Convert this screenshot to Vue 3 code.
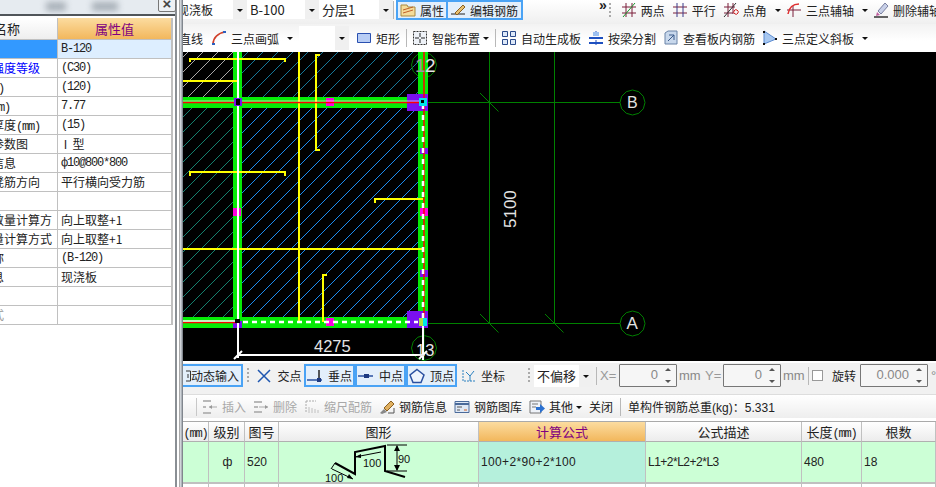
<template>
  <div class="app">
    <aside class="props">
      <div class="caption">
        <span class="blur blur-a"></span>
        <span class="blur blur-b"></span>
        <span class="close">×</span>
      </div>
      <div class="prop-grid">
        <div class="cell head"><span class="shift head-label">属性名称</span></div>
        <div class="cell head active">属性值</div>
        <template v-for="(row, i) in propRows" :key="i">
          <div class="cell label" :class="[row.kind, { selected: i === 0 }]">
            <span class="shift">{{ row.name }}<span v-if="row.unit" class="mono">{{ row.unit }}</span></span>
          </div>
          <div class="cell value" :class="{ 'value-on': i === 0, mono: row.mono }">{{ row.value }}</div>
        </template>
      </div>
    </aside>
    <div class="gutter"></div>

    <main class="work">
      <div class="bar bar-top">
        <div class="combo combo-a"><span class="combo-text clipped">现浇板</span><i class="drop"></i></div>
        <div class="combo combo-b"><span class="combo-text">B-100</span><i class="drop"></i></div>
        <div class="combo combo-c"><span class="combo-text">分层1</span><i class="drop"></i></div>
        <span class="sep"></span>
        <button class="tool on first-on"><Icon name="folder" />属性</button>
        <button class="tool on"><Icon name="pencil" />编辑钢筋</button>
        <span class="chevrons">»</span>
        <span class="grip"></span>
        <div class="tool-run">
          <button v-for="t in axisTools" :key="t.label" class="tool">
            <Icon :name="t.icon" />{{ t.label }}<i v-if="t.arrow" class="caret"></i>
          </button>
        </div>
      </div>

      <div class="bar bar-second">
        <span class="clipped-line">直线</span>
        <button class="tool arc"><Icon name="arc" />三点画弧<i class="caret"></i></button>
        <div class="combo combo-blank"><i class="drop"></i></div>
        <button class="tool"><Icon name="rect" />矩形</button>
        <span class="sep"></span>
        <button class="tool"><Icon name="smart" />智能布置<i class="caret tight"></i></button>
        <span class="sep"></span>
        <button class="tool"><Icon name="grid" />自动生成板</button>
        <button class="tool"><Icon name="split" />按梁分割</button>
        <button class="tool"><Icon name="view" />查看板内钢筋</button>
        <button class="tool"><Icon name="slope" />三点定义斜板<i class="caret"></i></button>
      </div>

      <svg class="canvas" viewBox="183 52 753 309" width="753" height="309">
        <defs>
          <pattern id="hatch-blue" width="15" height="15" patternUnits="userSpaceOnUse">
            <path d="M0 15L15 0" stroke="#1c8cf0" />
          </pattern>
          <pattern id="hatch-teal" width="15" height="15" patternUnits="userSpaceOnUse">
            <path d="M0 15L15 0" stroke="#14806e" />
          </pattern>
          <pattern id="hatch-top" width="15" height="15" patternUnits="userSpaceOnUse">
            <path d="M0 15L15 0" stroke="#16789a" />
          </pattern>
          <pattern id="hatch-grey" width="15" height="15" patternUnits="userSpaceOnUse">
            <path d="M0 15L15 0" stroke="#a8a8a8" />
          </pattern>
        </defs>
        <rect x="183" y="52" width="753" height="309" fill="#000" />

        <rect x="183" y="52" width="50" height="45" fill="url(#hatch-grey)" />
        <rect x="183" y="107" width="50" height="210" fill="url(#hatch-teal)" />
        <rect x="242" y="52" width="176" height="45" fill="url(#hatch-top)" />
        <rect x="242" y="107" width="176" height="210" fill="url(#hatch-blue)" />

        <g stroke="#008000" fill="none">
          <path d="M428 102.500H620M428 323.500H620M424 52V361M489.500 52V323M554.500 52V323" />
          <path d="M480 93L498.500 111.500M480 314L498.500 332.500M545 314L563.500 332.500" />
          <polygon :points="ring(632.5, 102.5)" />
          <polygon :points="ring(632.5, 323.5)" />
          <polygon :points="ring(424, 65)" />
          <polygon :points="ring(424, 348)" />
        </g>

        <g fill="#06ec06">
          <rect x="183" y="97" width="235" height="11" />
          <rect x="183" y="317" width="235" height="11" />
          <rect x="233" y="52" width="9" height="276" />
          <rect x="418" y="52" width="10" height="276" />
        </g>
        <g fill="#7a10f0">
          <rect x="407" y="94" width="21" height="17" />
          <rect x="407" y="311" width="21" height="17" />
          <rect x="420" y="148" width="8" height="6" />
          <rect x="420" y="270" width="8" height="7" />
          <rect x="233" y="321" width="9" height="7" />
        </g>
        <g fill="#ff00e0">
          <rect x="326" y="98" width="8" height="8" />
          <rect x="326" y="318" width="8" height="8" />
          <rect x="233" y="208" width="8" height="8" />
          <rect x="420" y="208" width="8" height="8" />
        </g>

        <g stroke="#ffff00" stroke-width="2" fill="none">
          <path d="M190 62V59H285V62M183 81H238M299 52V322M320 55H316V150H320M190 176V172H285V176M375 203V199H423M183 249H423M327 275H323V322" />
        </g>

        <g fill="none">
          <path d="M183 102.500H421M424 52V326M183 322.500H240" stroke="#ff0000" stroke-width="1.500" />
          <path d="M183 101H421" stroke="#ffffff" stroke-width="0.600" />
          <path d="M238 52V326" stroke="#ffffff" stroke-width="2" />
          <path d="M423 104V326" stroke="#ffffff" stroke-width="2.500" stroke-dasharray="5 6" />
          <path d="M243 322H418" stroke="#ffffff" stroke-width="2.500" stroke-dasharray="5 4" />
          <path d="M183 321H240" stroke="#ffffff" stroke-width="1.500" />
          <path d="M238 326V358M423 326V360M238 355H423M234 359L242 351M419 359L427 351" stroke="#ffffff" stroke-width="2" />
        </g>

        <g>
          <rect x="234" y="98" width="8" height="8" fill="#7a10f0" />
          <rect x="236" y="99" width="4" height="6" fill="#000" />
          <rect x="419" y="98" width="8" height="8" fill="#00e8e8" />
          <rect x="421" y="100" width="3" height="3" fill="#000" />
          <rect x="235" y="319" width="5" height="4" fill="#000" />
          <rect x="419" y="318" width="8" height="8" fill="#b0e040" />
          <rect x="423" y="318" width="4" height="8" fill="#00e8e8" />
        </g>

        <g class="cad-text">
          <text x="314" y="352" font-size="16.5">4275</text>
          <text x="416" y="356" font-size="16.5">13</text>
          <text x="415" y="72" font-size="19" fill="#9a9a9a">1</text>
          <text x="425" y="72" font-size="19">2</text>
          <text x="627" y="108" font-size="16">B</text>
          <text x="626.5" y="329" font-size="17">A</text>
          <text transform="translate(516 228) rotate(-90)" font-size="17">5100</text>
        </g>
      </svg>

      <div class="bar bar-snap">
        <button class="snap on dyn"><Icon name="dyn" />动态输入</button>
        <span class="grip"></span>
        <button class="snap plain"><Icon name="cross" />交点</button>
        <button class="snap on"><Icon name="perp" />垂点</button>
        <button class="snap on"><Icon name="mid" />中点</button>
        <button class="snap on"><Icon name="vertex" />顶点</button>
        <button class="snap"><Icon name="coord" />坐标</button>
        <span class="grip offset-grip"></span>
        <div class="combo combo-offset"><span class="combo-text">不偏移</span><i class="drop"></i></div>
        <span class="sep sep-x"></span>
        <span class="dim-label">X=</span>
        <div class="spin"><span>0</span><i class="spin-arrows"></i></div>
        <span class="unit">mm</span>
        <span class="dim-label y-label">Y=</span>
        <div class="spin"><span>0</span><i class="spin-arrows"></i></div>
        <span class="unit">mm</span>
        <span class="sep sep-check"></span>
        <span class="check"></span>
        <span class="rotate-label">旋转</span>
        <div class="spin spin-wide"><span>0.000</span><i class="spin-arrows"></i></div>
        <span class="unit degree">°</span>
      </div>

      <div class="bar bar-rebar">
        <span class="sep muted-sep"></span>
        <button class="tool off"><Icon name="insert" />插入</button>
        <button class="tool off"><Icon name="remove" />删除</button>
        <button class="tool off"><Icon name="scale" />缩尺配筋</button>
        <button class="tool"><Icon name="info" />钢筋信息</button>
        <button class="tool"><Icon name="library" />钢筋图库</button>
        <button class="tool"><Icon name="other" />其他<i class="caret tight"></i></button>
        <button class="tool">关闭</button>
        <span class="sep"></span>
        <span class="total">单构件钢筋总重(kg)：5.331</span>
      </div>

      <div class="rebar-table">
        <div v-for="h in rebarHead" :key="h.text + h.unit" class="r-head" :class="{ active: h.active }">
          {{ h.text }}<span v-if="h.unit" class="mono">{{ h.unit }}</span>
        </div>
        <div class="r-cell"></div>
        <div class="r-cell center">ф</div>
        <div class="r-cell">520</div>
        <div class="r-cell shape">
          <svg width="200" height="41" viewBox="0 0 200 41">
            <path d="M56 21L76 32V10L106 4V29L126 35" fill="none" stroke="#000" stroke-width="2" />
            <path d="M108 3H128M108 29H128M118 4V28M76 15L102 10M53 27L74 37M56 21L52 27" fill="none" stroke="#000" />
            <path d="M118 3L115 9H121ZM118 29L115 23H121ZM76 15L82 12V16ZM74 37L68 36L70 32Z" fill="#000" />
            <text x="119" y="21" class="shape-text">90</text>
            <text x="84" y="25" class="shape-text">100</text>
            <text x="46" y="40" class="shape-text">100</text>
          </svg>
        </div>
        <div class="r-cell formula">100+2*90+2*100</div>
        <div class="r-cell desc">L1+2*L2+2*L3</div>
        <div class="r-cell">480</div>
        <div class="r-cell">18</div>
        <div v-for="n in 8" :key="n" class="r-empty"></div>
      </div>
    </main>
  </div>
</template>

<script setup>
import { h } from 'vue'

// 图标都是 16x16 的简单路径
const icons = {
  folder: [
    { d: 'M1 3H7L8 5H15V14H1Z', f: '#f5dc9a', s: '#a88a40' },
    { d: 'M3 8L13 5M3 11L13 8', s: '#c0602a' }
  ],
  pencil: [
    { d: 'M1 12H15', s: '#222' },
    { d: 'M5 11L13 3L15 5L7 13Z', f: '#e8c070', s: '#8a6020' }
  ],
  arc: [
    { d: 'M2 14C2 8 7 3 14 2', s: '#d0402a', w: 1.5 },
    { d: 'M1 13H4V15H1ZM12 1H15V3H12Z', f: '#2a60c0' }
  ],
  rect: [{ d: 'M1.5 3.5H14.5V12.5H1.5Z', f: '#b8cdf5', s: '#2a50b0' }],
  smart: [
    { d: 'M1.5 1.5H14.5V14.5H1.5Z', s: '#333', dash: '2 1', f: '#eef2f8' },
    { d: 'M8 3V7M8 9V13M3 8H7M9 8H13', s: '#222' }
  ],
  grid: [{ d: 'M1.5 1.5H6.5V6.5H1.5ZM9.5 1.5H14.5V6.5H9.5ZM1.5 9.5H6.5V14.5H1.5ZM9.5 9.5H14.5V14.5H9.5Z', s: '#2a4a8a', f: '#dde8f8' }],
  split: [
    { d: 'M1 8H15M1 13H15', s: '#1e50c0', w: 2 },
    { d: 'M8 1V15', s: '#1e50c0', dash: '2 1' },
    { d: 'M5 2H11V6H5Z', f: '#9cc0f0' }
  ],
  view: [
    { d: 'M2 3L5 1H14V14H2Z', f: '#c8d8ec', s: '#6a84a8' },
    { d: 'M5 11L11 5M6 5H11V10', s: '#3a5a8a' }
  ],
  slope: [
    { d: 'M2 1V14L14 9Z', f: '#a8c8f0', s: '#5a8ad0' },
    { d: 'M1 1H3V3H1ZM1 13H3V15H1ZM13 8H15V10H13Z', f: '#111' }
  ],
  two: [
    { d: 'M1 5H15M1 11H15', s: '#7a1f3a' },
    { d: 'M5 1V15M11 1V15', s: '#7a1f3a' },
    { d: 'M2 15L14 1', s: '#1a9a30' }
  ],
  parallel: [
    { d: 'M1 5H15M1 11H15', s: '#7a1f3a' },
    { d: 'M5 1V15M11 1V15', s: '#3a3a8a' }
  ],
  angle: [
    { d: 'M1 5H12M1 11H10M5 1V15M10 1V12', s: '#7a1f3a' },
    { d: 'M1 15L13 1', s: '#333' },
    { d: 'M11 9A2 2 0 1 1 15 11A2 2 0 1 1 11 9', s: '#d02020' }
  ],
  threeAxis: [
    { d: 'M1 8H15M7 4V15', s: '#7a1f3a' },
    { d: 'M2 12C3 6 7 2 13 2', s: '#e03030', w: 1.5 }
  ],
  eraser: [
    { d: 'M1 15H15', s: '#333', w: 1.5 },
    { d: 'M5 9L12 1L15 4L8 12Z', f: '#c8d0e8', s: '#7a80a0' },
    { d: 'M4 10L7 13L3 14Z', f: '#c060a0' }
  ],
  dyn: [{ d: 'M11 3H15.5V13H11M13 6V10', s: '#333' }],
  cross: [{ d: 'M2 2L14 14M14 2L2 14', s: '#1e56b0', w: 1.5 }],
  perp: [
    { d: 'M0 12H15', s: '#2a50a0', w: 1.5 },
    { d: 'M12 2V14', s: '#222', w: 1.5 },
    { d: 'M10 10H14V14H10Z', f: '#1e3a80' }
  ],
  mid: [
    { d: 'M0 8H15', s: '#2a50a0', w: 1.5 },
    { d: 'M6 6H11V10H6Z', f: '#1e3a80' }
  ],
  vertex: [{ d: 'M8 1.5L15 7L12 14.5H4L1 7Z', s: '#2a50a0', w: 1.5, f: '#eef4fc' }],
  coord: [
    { d: 'M3 2V13H15', s: '#2a80c0', dash: '2 1' },
    { d: 'M6 4L10 8L14 3M10 8V13', s: '#2a80c0' }
  ],
  insert: [
    { d: 'M1 2H9M1 8H4M1 14H9', s: '#b8b8b8', w: 2 },
    { d: 'M7 8H15', s: '#aaa' },
    { d: 'M7 8L10 6V10Z', f: '#999' }
  ],
  remove: [
    { d: 'M1 3H9M1 8H5M1 13H9', s: '#b8b8b8', w: 2 },
    { d: 'M6 8H15', s: '#aaa' },
    { d: 'M15 8L12 6V10Z', f: '#999' }
  ],
  scale: [
    { d: 'M2 2H12M2 2V14', s: '#aaa', dash: '2 1' },
    { d: 'M5 14V8M8 14V9M11 14V10M14 14V11', s: '#c0c0c0' }
  ],
  info: [
    { d: 'M1 14L5 10L8 13L3 15Z', f: '#888' },
    { d: 'M5 9L12 2L15 5L8 12Z', f: '#e0b060', s: '#8a6020' },
    { d: 'M9 14H15V9', s: '#555' }
  ],
  library: [
    { d: 'M1 2.5H15V13.5H1Z', f: '#dfe8f5', s: '#4a6a9a' },
    { d: 'M1 5H15', s: '#4a6a9a', w: 2 },
    { d: 'M3 8H8M3 11H6', s: '#555' },
    { d: 'M10 11H13', s: '#d06020' }
  ],
  other: [
    { d: 'M1 2H12V14H1Z', f: '#eef2f8', s: '#777' },
    { d: 'M3 5H9M3 8H7', s: '#777' },
    { d: 'M7 8H11V5L16 9.5L11 14V11H7Z', f: '#2a70d0' }
  ]
}

const Icon = (props) =>
  h(
    'svg',
    { class: 'icon', width: 16, height: 16, viewBox: '0 0 16 16' },
    icons[props.name].map((p) =>
      h('path', {
        d: p.d,
        fill: p.f || 'none',
        stroke: p.s || 'none',
        'stroke-width': p.w || 1,
        'stroke-dasharray': p.dash
      })
    )
  )
Icon.props = ['name']

const propRows = [
  { name: '', value: 'B-120', mono: true },
  { name: '混凝土强度等级', value: '(C30)', kind: 'blue', mono: true },
  { name: '厚度', unit: '(mm)', value: '(120)', mono: true },
  { name: '顶标高', unit: '(m)', value: '7.77', mono: true },
  { name: '保护层厚度', unit: '(mm)', value: '(15)', mono: true },
  { name: '马凳筋参数图', value: '\u00a0I\u00a0\u00a0型' },
  { name: '马凳筋信息', value: 'ф10@800*800', mono: true },
  { name: '线形马凳筋方向', value: '平行横向受力筋' },
  { name: '', value: '' },
  { name: '马凳筋数量计算方', value: '向上取整+1' },
  { name: '拉筋数量计算方式', value: '向上取整+1' },
  { name: '归类名称', value: '(B-120)', mono: true },
  { name: '汇总信息', value: '现浇板' },
  { name: '', value: '' },
  { name: '计算方式', value: '', kind: 'grey' }
]

const axisTools = [
  { icon: 'two', label: '两点' },
  { icon: 'parallel', label: '平行' },
  { icon: 'angle', label: '点角', arrow: true },
  { icon: 'threeAxis', label: '三点辅轴', arrow: true },
  { icon: 'eraser', label: '删除辅轴' }
]

const rebarHead = [
  { text: '', unit: '(mm)' },
  { text: '级别' },
  { text: '图号' },
  { text: '图形' },
  { text: '计算公式', active: true },
  { text: '公式描述' },
  { text: '长度', unit: '(mm)' },
  { text: '根数' }
]

// 轴号圈是 12 边形，看起来带点锯齿
const ring = (cx, cy) => {
  const pts = []
  for (let i = 0; i < 12; i++) {
    const a = (i * Math.PI) / 6
    pts.push(`${(cx + 12.5 * Math.cos(a)).toFixed(1)},${(cy + 12.5 * Math.sin(a)).toFixed(1)}`)
  }
  return pts.join(' ')
}
</script>

<style>
html,
body {
  margin: 0;
  background: #fff;
}
</style>

<style scoped>
.app {
  display: flex;
  width: 936px;
  height: 487px;
  overflow: hidden;
  font-family: "Liberation Sans", "Noto Sans CJK SC", sans-serif;
  font-size: 12px;
  color: #222;
}

button {
  font: inherit;
  color: inherit;
  background: none;
  border: 0;
  padding: 0;
}

.mono {
  font-family: "Liberation Mono", "Noto Sans CJK SC", monospace;
  font-size: 12px;
  letter-spacing: -1.2px;
}

/* left property panel */
.props {
  width: 175px;
  flex: none;
  background: #fff;
  border-right: 2px solid #8a8f94;
}

.caption {
  position: relative;
  height: 14px;
  background: #e6ebf0;
  border-bottom: 2px solid #50555a;
  margin-bottom: 2px;
}

.blur {
  position: absolute;
  top: 2px;
  height: 9px;
  background: #a8b0b8;
  filter: blur(3px);
}

.blur-a {
  left: 46px;
  width: 20px;
}

.blur-b {
  left: 92px;
  width: 26px;
}

.close {
  position: absolute;
  top: -3px;
  left: 158px;
  width: 16px;
  height: 13px;
  line-height: 12px;
  text-align: center;
  font-size: 15px;
  font-weight: 700;
  color: #444;
  background: #eef1f4;
  border: 1px solid #777;
  border-radius: 2px;
}

.prop-grid {
  display: grid;
  grid-template-columns: 58px 115px;
  grid-template-rows: 22px repeat(15, 19px);
  width: 173px;
}

.cell {
  box-sizing: border-box;
  height: 100%;
  overflow: hidden;
  white-space: nowrap;
  line-height: 18px;
  border-right: 1px solid #c0c0c0;
  border-bottom: 1px solid #c0c0c0;
  font-family: "Noto Sans CJK SC", "Liberation Sans", sans-serif;
  font-size: 12px;
}

.cell:nth-child(2n) {
  border-right: 2px solid #c0c0c0;
}

.cell.mono {
  font-family: "Liberation Mono", "Noto Sans CJK SC", monospace;
  letter-spacing: -1.2px;
}

.head {
  font-size: 13px;
  line-height: 21px;
  background: linear-gradient(#fff, #eee);
}

.head.active,
.r-head.active {
  background: linear-gradient(#fcdca0, #f2b75c);
  color: #800080;
  text-align: center;
}

.shift {
  display: inline-block;
  margin-left: -44px;
}

.head-label {
  margin-left: -32px;
}

.label.blue {
  color: #0000ff;
}

.label.grey {
  color: #999;
}

.label.selected {
  background: #3399ff;
}

.value {
  padding-left: 3px;
}

.value-on {
  background: #ddeeff;
}

.gutter {
  width: 6px;
  flex: none;
  background: linear-gradient(90deg, #fff 0 25%, #999 45%, #d8dde2 60%, #6a7078);
}

/* main column */
.work {
  flex: 1;
  min-width: 0;
  display: flex;
  flex-direction: column;
}

.bar {
  display: flex;
  align-items: center;
  flex: none;
  white-space: nowrap;
  overflow: hidden;
}

.bar-top {
  height: 24px;
  align-items: flex-start;
  background: linear-gradient(#fff, #efefef);
}

.bar-second {
  height: 28px;
  background: linear-gradient(#f2f2f2, #fff 60%);
  gap: 7px;
}

.bar-second .sep {
  margin: 0 -2px 0 -1px;
}

.tool {
  display: inline-flex;
  align-items: center;
  gap: 4px;
  flex: none;
  height: 20px;
}

.tool.off {
  color: #a8a8a8;
}

.icon {
  flex: none;
}

.combo {
  display: flex;
  align-items: center;
  height: 19px;
  background: #fff;
  overflow: hidden;
  flex: none;
}

.combo-text {
  flex: 1;
  padding-left: 3px;
  font-size: 13px;
  font-family: "Noto Sans CJK SC", sans-serif;
}

.combo-text.clipped {
  margin-left: -9px;
  font-size: 12px;
}

.combo-a {
  width: 64px;
}

.combo-b {
  width: 72px;
}

.combo-c {
  width: 74px;
}

.combo-blank {
  width: 50px;
  height: 24px;
  margin-left: 1px;
}

.combo-offset {
  width: 59px;
  height: 22px;
  margin-left: 3px;
}

.drop {
  width: 14px;
  height: 100%;
  flex: none;
  margin-left: auto;
  background: #f0f0f0;
  position: relative;
}

.drop::after,
.caret::after {
  content: '';
  position: absolute;
  left: 4px;
  top: 50%;
  margin-top: -1px;
  border: 3px solid transparent;
  border-top: 3px solid #111;
  border-bottom: 0;
}

.caret {
  display: inline-block;
  position: relative;
  width: 8px;
  height: 10px;
}

.caret.tight {
  width: 5px;
}

.caret.tight::after {
  left: -1px;
}

.sep {
  width: 1px;
  height: 18px;
  background: #b8b8b8;
  flex: none;
}

.bar-top .sep {
  margin: 1px 1px 0 0;
}

.on {
  background: #e3effb;
  border: 2px solid #4aa3f5;
  box-sizing: border-box;
}

.bar-top .on {
  height: 20px;
  padding: 0 2px;
}

.bar-top .first-on {
  border-right-width: 1px;
  margin-left: 1px;
}

.bar-top .tool.on + .tool.on {
  border-left-width: 1px;
  padding-right: 3px;
}

.chevrons {
  margin-left: 76px;
  font-size: 14px;
  font-weight: 700;
  line-height: 14px;
  margin-top: -2px;
  width: 16px;
}

.grip {
  width: 3px;
  height: 16px;
  flex: none;
  background-image: linear-gradient(#aaa 50%, transparent 50%);
  background-size: 2px 4px;
  background-repeat: repeat-y;
  margin-left: 2px;
}

.bar-top .grip {
  margin-top: 3px;
}

.tool-run {
  display: flex;
  gap: 7px;
  margin-left: 9px;
  flex: none;
}

.clipped-line {
  margin-left: -4px;
  margin-right: 1px;
}

.canvas {
  display: block;
  flex: none;
  background: #000;
}

.cad-text text {
  fill: #e4e4e4;
  font-family: "Liberation Sans", sans-serif;
}

.cad-text text[fill] {
  fill: #9a9a9a;
}

.bar-snap {
  height: 33px;
  background: #f1f1f1;
  border-top: 2px solid #fff;
  box-sizing: border-box;
  padding-bottom: 6px;
}

.snap {
  display: inline-flex;
  align-items: center;
  justify-content: center;
  gap: 5px;
  flex: none;
  width: 51px;
  height: 23px;
  box-sizing: border-box;
}

.snap.dyn {
  width: 62px;
  margin-left: -2px;
  justify-content: flex-start;
  overflow: hidden;
  gap: 0;
}

.snap.dyn .icon {
  margin-left: -8px;
}

.snap.plain {
  width: 50px;
}

.bar-snap > .grip {
  margin: 0 4px;
}

.bar-snap > .offset-grip {
  margin: 0 0 0 20px;
}

.dim-label {
  color: #999;
  margin-left: 3px;
  width: 19px;
  font-size: 13px;
  flex: none;
}

.y-label {
  margin-left: 2px;
  width: 18px;
}

.spin {
  position: relative;
  width: 58px;
  height: 23px;
  box-sizing: border-box;
  flex: none;
  border: 1.5px solid #777;
  border-radius: 1px;
  background: #f6f6f6;
  color: #888;
  font-size: 13px;
  line-height: 20px;
  text-align: right;
  padding-right: 18px;
}

.spin-wide {
  width: 68px;
  margin-left: 4px;
}

.spin-arrows::before,
.spin-arrows::after {
  content: '';
  position: absolute;
  right: 5px;
  border: 3px solid transparent;
}

.spin-arrows::before {
  top: 3px;
  border-bottom: 3px solid #555;
  border-top: 0;
}

.spin-arrows::after {
  bottom: 3px;
  border-top: 3px solid #555;
  border-bottom: 0;
}

.unit {
  color: #888;
  font-size: 13px;
  margin-left: 2px;
  width: 24px;
  flex: none;
}

.degree {
  margin-left: 3px;
}

.bar-snap > .sep-x {
  margin-left: 3px;
}

.bar-snap > .sep-check {
  margin-left: 1px;
}

.check {
  width: 11px;
  height: 11px;
  margin-left: 3px;
  border: 1px solid #999;
  background: #fff;
  box-sizing: border-box;
  flex: none;
}

.rotate-label {
  margin-left: 9px;
  width: 24px;
  flex: none;
}

.bar-rebar {
  height: 24px;
  gap: 7px;
  padding-left: 13px;
  background: linear-gradient(#fff, #eeeeee);
  border-top: 1px solid #ddd;
  box-sizing: border-box;
}

.muted-sep {
  background: #c8c8c8;
  margin-right: -2px;
}

.rebar-table {
  display: grid;
  grid-template-columns: 26px 36px 34px 200px 167px 156px 60px 74px;
  grid-template-rows: 20px 42px 20px;
  border-top: 1px solid #aaa;
  margin-top: 3px;
}

.r-head {
  box-sizing: border-box;
  border-right: 1px solid #c0c0c0;
  border-bottom: 1px solid #b0b0b0;
  background: linear-gradient(#fff, #ececec);
  text-align: center;
  line-height: 19px;
  font-size: 13px;
  font-family: "Noto Sans CJK SC", sans-serif;
  overflow: hidden;
  white-space: nowrap;
}

.r-cell {
  box-sizing: border-box;
  background: #ccffd6;
  border-right: 1px solid #c0c0c0;
  border-bottom: 2px solid #c0c0c0;
  padding-left: 2px;
  line-height: 40px;
  font-size: 12px;
  white-space: nowrap;
  overflow: hidden;
}

.r-cell.center {
  text-align: center;
}

.r-cell.shape {
  padding: 0;
  line-height: 0;
}

.r-cell.formula {
  background: #b5f0dc;
  letter-spacing: 0.35px;
}

.r-cell.desc {
  letter-spacing: -0.5px;
}

.shape-text {
  font-family: "Liberation Sans", sans-serif;
  font-size: 11px;
  fill: #111;
}

.r-empty {
  border-right: 1px solid #c0c0c0;
}
</style>
